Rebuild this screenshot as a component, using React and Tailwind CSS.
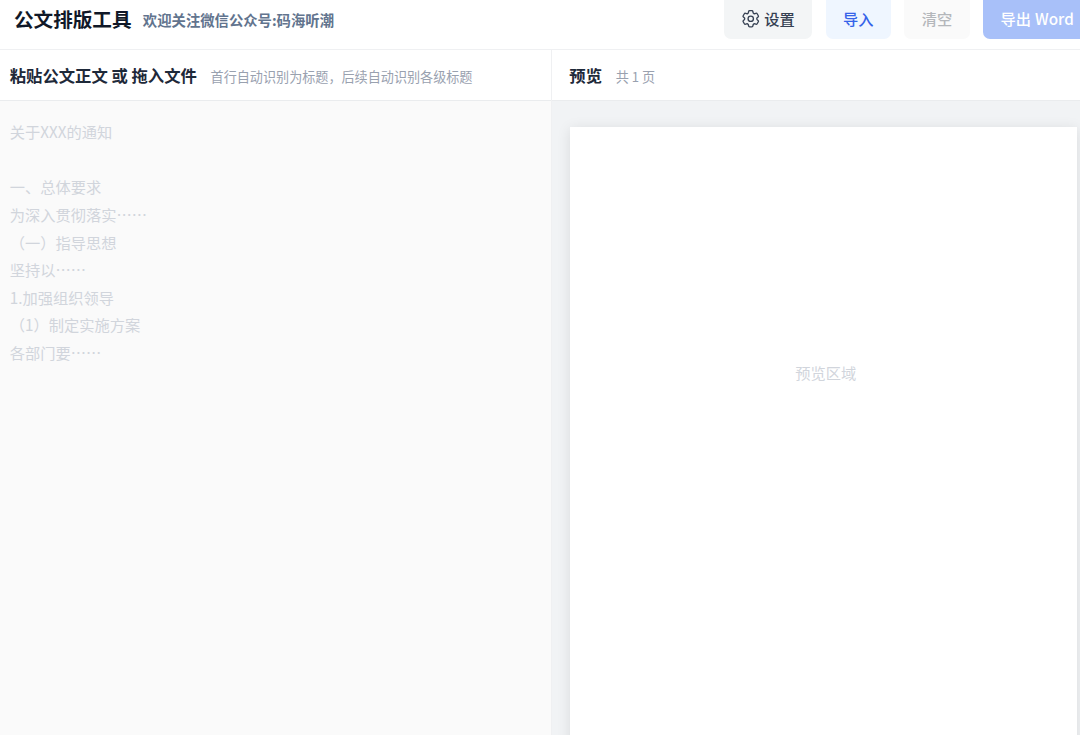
import { HiOutlineCog6Tooth } from 'react-icons/hi2';

const sampleLines = [
  '关于XXX的通知',
  '',
  '一、总体要求',
  '为深入贯彻落实……',
  '（一）指导思想',
  '坚持以……',
  '1.加强组织领导',
  '（1）制定实施方案',
  '各部门要……',
];

function ToolButton({ className, children, ...props }) {
  return (
    <button
      type="button"
      className={`flex h-[46px] shrink-0 items-center rounded-[7px] px-[17.5px] pt-[5px] text-[15.25px] font-medium whitespace-nowrap ${className}`}
      {...props}
    >
      {children}
    </button>
  );
}

function PanelHeader({ title, hint, className }) {
  return (
    <div className={`flex h-[51px] shrink-0 items-center border-b border-[#eaecee] bg-white ${className}`}>
      <h2 className="text-[16.35px] font-bold text-gray-800">{title}</h2>
      <span className="ml-[13.7px] pt-[3px] text-[13.1px] text-gray-400">{hint}</span>
    </div>
  );
}

export default function App() {
  return (
    <div className="flex h-[735px] w-[1080px] flex-col overflow-hidden bg-white font-['Noto_Sans_CJK_SC',sans-serif]">
      <header className="flex h-[50px] shrink-0 items-start justify-between border-b border-[#eff0f2] pl-[14px]">
        <div className="flex h-[37px] items-center">
          <h1 className="text-[19.6px] font-bold text-gray-900">公文排版工具</h1>
          <span className="ml-[11.3px] pt-[3px] text-[14.35px] font-bold text-slate-500">
            欢迎关注微信公众号:码海听潮
          </span>
        </div>
        <div className="-mr-[11.3px] -mt-[7px] flex gap-[13.3px]">
          <ToolButton className="bg-[#f3f5f6] text-gray-700">
            <HiOutlineCog6Tooth className="-ml-[1.5px] mr-[3px] h-[21.5px] w-[21.5px]" />
            设置
          </ToolButton>
          <ToolButton className="bg-[#eff6ff] text-[#3563e9]">导入</ToolButton>
          <ToolButton className="bg-[#fafafa] text-[#b4b7bb]" disabled>清空</ToolButton>
          <ToolButton className="bg-[#a8c0f9] text-white" disabled>
            导出<span className="ml-[4px]">Word</span>
          </ToolButton>
        </div>
      </header>

      <main className="flex min-h-0 flex-1">
        <section className="flex w-[552px] shrink-0 flex-col border-r border-[#eff0f2]">
          <PanelHeader title="粘贴公文正文 或 拖入文件" hint="首行自动识别为标题，后续自动识别各级标题" className="pl-[9.7px]" />
          <div className="flex-1 bg-[#fafafa] pt-[17.2px] pl-[9.7px] text-[15.25px] leading-[27.6px] text-gray-300">
            {sampleLines.map((line, i) => (
              <p key={i} className="h-[27.6px]">{line}</p>
            ))}
          </div>
        </section>

        <section className="flex min-w-0 flex-1 flex-col bg-[#f1f3f5]">
          <PanelHeader title="预览" hint="共 1 页" className="pl-[17.3px]" />
          <div className="min-h-0 flex-1 pt-[26px] pl-[18px]">
            <div className="h-[720px] w-[507px] bg-white pt-[234px] pl-[225.2px] shadow-[0_2px_13px_rgba(0,0,0,0.1)]">
              <p className="text-[15.25px] text-gray-300">预览区域</p>
            </div>
          </div>
        </section>
      </main>
    </div>
  );
}
